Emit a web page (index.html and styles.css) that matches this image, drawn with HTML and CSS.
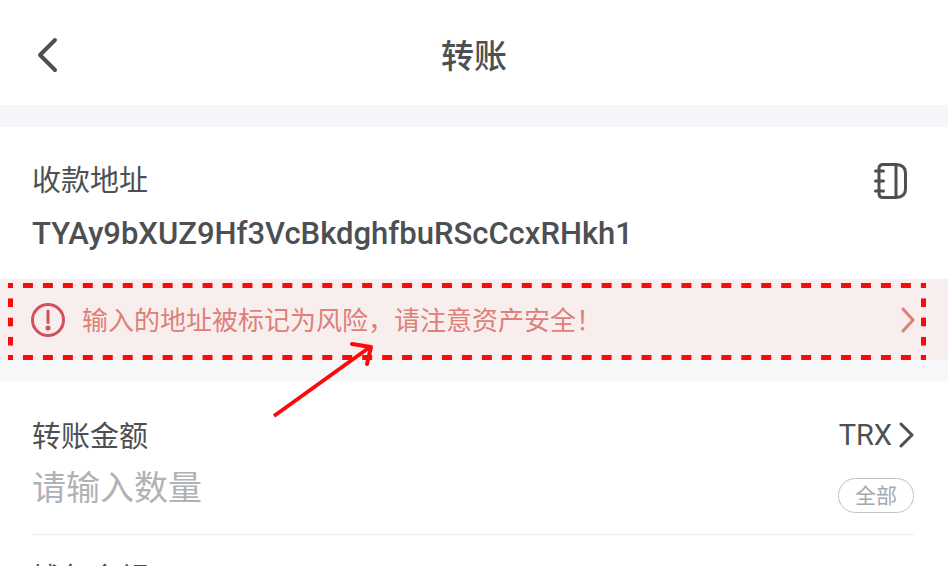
FILE: index.html
```html
<!DOCTYPE html>
<html lang="zh-CN">
  <head>
    <meta charset="utf-8">
    <meta name="viewport" content="width=device-width, initial-scale=1">
    <title>转账</title>
    <link rel="stylesheet" href="styles.css">
  </head>
  <body>
    <header class="header">
      <button class="back" type="button" aria-label="返回">
        <svg width="24" height="36" viewBox="0 0 24 36">
          <path d="M21 3 L6 18 L21 33" />
        </svg>
      </button>
      <h1 class="title">转账</h1>
    </header>

    <main>
      <section class="address">
        <div class="row">
          <label class="label" for="address">收款地址</label>
          <button type="button" aria-label="地址簿">
            <svg width="34" height="38" viewBox="0 0 34 38">
              <path d="M9 2.500H22Q31.500 3 31.500 11V27Q31.500 35 22 35.500H9Q5 35.500 5 31.500V6.500Q5 2.500 9 2.500ZM22 3V35M1.500 9H9.500M1.500 19H9.500M1.500 29H9.500" />
            </svg>
          </button>
        </div>
        <input class="address-input" id="address" type="text" value="TYAy9bXUZ9Hf3VcBkdghfbuRScCcxRHkh1" spellcheck="false">
      </section>

      <div class="warning">
        <a class="warning-link" href="#">
          <svg class="warning-icon" width="34" height="34" viewBox="0 0 34 34">
            <circle cx="17" cy="17" r="15.500" />
            <path d="M17 8V19.500" />
            <circle class="dot" cx="17" cy="25" r="2.500" />
          </svg>
          <span class="warning-text">输入的地址被标记为风险，请注意资产安全！</span>
          <svg class="chevron" width="16" height="26" viewBox="0 0 16 26">
            <path d="M3 2 L13 13 L3 24" />
          </svg>
        </a>
        <div class="highlight"></div>
        <svg class="arrow" width="104" height="78" viewBox="0 0 104 78">
          <path d="M2 75 L98 6" />
          <path class="arrow-head" d="M80 3 L99 6 L95 23" />
        </svg>
      </div>

      <section class="amount">
        <div class="row">
          <label class="label" for="amount">转账金额</label>
          <button class="token" type="button">
            TRX
            <svg class="chevron" width="16" height="26" viewBox="0 0 16 26">
              <path d="M3 2 L14 13 L3 24" />
            </svg>
          </button>
        </div>
        <div class="row amount-row">
          <input class="amount-input" id="amount" type="text" placeholder="请输入数量">
          <button class="all" type="button">全部</button>
        </div>
      </section>

      <section class="balance">
        <div class="label">钱包余额</div>
      </section>
    </main>
  </body>
</html>
```

FILE: styles.css
```css
* {
  box-sizing: border-box;
}

body {
  margin: 0;
  height: 100vh;
  overflow: hidden;
  background-color: #ffffff;
  color: #4c5052;
  font-family: Roboto, "Noto Sans CJK SC", sans-serif;
}

button,
input {
  padding: 0;
  border: none;
  background: none;
  color: inherit;
  font-family: inherit;
}

button {
  cursor: pointer;
}

input {
  min-width: 0;
  outline: none;
}

svg {
  display: block;
  flex-shrink: 0;
  fill: none;
  stroke: currentColor;
  stroke-width: 3px;
  stroke-linecap: round;
  stroke-linejoin: round;
}

.header {
  display: grid;
  grid-template-columns: 24px 1fr 24px;
  align-items: center;
  padding: 28px 34px 24px;
}

.title {
  margin: 0;
  padding-top: 5px;
  font-size: 33px;
  line-height: 48px;
  font-weight: 500;
  text-align: center;
}

.back svg {
  stroke-width: 4px;
}

.row {
  display: flex;
  align-items: center;
  justify-content: space-between;
}

.label {
  font-size: 29px;
  line-height: 44px;
}

.address {
  padding: 32px 40px 16px 32px;
  border-top: 22px solid #f5f6f9;
}

.address-input {
  display: block;
  width: 100%;
  height: 60px;
  font-size: 31px;
  font-weight: 500;
}

.warning {
  position: relative;
  border-bottom: 21px solid #f5f7f9;
}

.warning-link {
  display: flex;
  align-items: center;
  gap: 17px;
  height: 81px;
  padding: 0 32px 0 31px;
  background-color: #f9eeee;
  color: #dd8078;
  text-decoration: none;
}

.warning-icon {
  color: #d2505a;
}

.warning-icon .dot {
  fill: currentColor;
  stroke: none;
}

.warning-text {
  flex: 1;
  padding-top: 2px;
  font-size: 26px;
  line-height: 40px;
}

/* Dashed frame around the warning */
.highlight {
  position: absolute;
  inset: 4px 22px 0 8px;
  background-image:
    linear-gradient(90deg, #fa0a0a 5px, transparent 5px 15px, #fa0a0a 15px),
    linear-gradient(90deg, #fa0a0a 5px, transparent 5px 15px, #fa0a0a 15px),
    linear-gradient(#fa0a0a 5px, transparent 5px 15px, #fa0a0a 15px),
    linear-gradient(#fa0a0a 5px, transparent 5px 15px, #fa0a0a 15px);
  background-position: top left, bottom left, top left, top right;
  background-size: 20px 5px, 20px 5px, 5px 20px, 5px 20px;
  background-repeat: round no-repeat, round no-repeat, no-repeat round, no-repeat round;
  pointer-events: none;
}

.arrow {
  position: absolute;
  top: 62px;
  left: 272px;
  z-index: 1;
  color: #fa0a0a;
  stroke-width: 4px;
  stroke-linecap: butt;
  pointer-events: none;
}

.arrow-head {
  stroke-linecap: round;
}

.amount {
  margin: 0 34px 0 32px;
  padding: 30px 0 18px;
  border-bottom: 1px solid #eaeeef;
}

.amount .label {
  padding-top: 4px;
}

.token {
  display: flex;
  align-items: center;
  gap: 6px;
  font-size: 29px;
  line-height: 44px;
}

.amount-row {
  gap: 20px;
}

.amount-input {
  flex: 1;
  height: 57px;
  font-size: 34px;
}

.amount-input::placeholder {
  color: #b0b2b5;
  opacity: 1;
}

.all {
  width: 76px;
  height: 35px;
  margin-top: 16px;
  padding-top: 1px;
  border: 1px solid #bfc2c6;
  border-radius: 18px;
  color: #a5a8ac;
  font-size: 21px;
  line-height: 32px;
}

.balance {
  padding: 22px 34px 0 32px;
}
```
